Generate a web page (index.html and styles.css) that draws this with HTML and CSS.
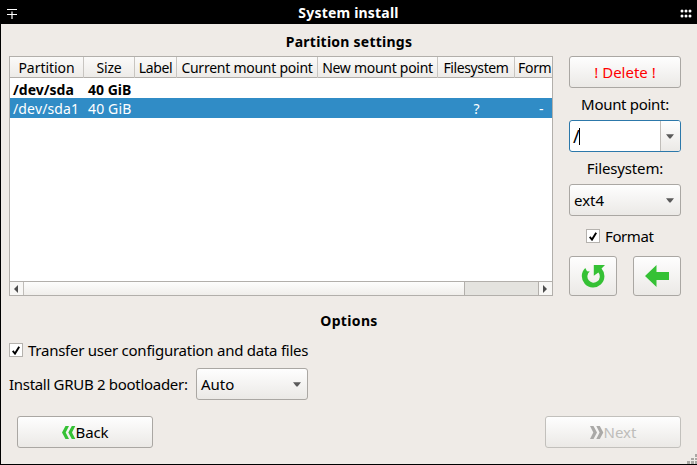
FILE: index.html
```html
<!DOCTYPE html>
<html lang="en">
<head>
<meta charset="utf-8">
<title>System install</title>
<link rel="stylesheet" href="styles.css">
</head>
<body>
<div class="window">
  <header class="titlebar">
    <svg class="menu-icon" width="10" height="10" viewBox="0 0 10 10"><path d="M0 .5h10M0 5.500h10M5 2.500v7.500" stroke="#fff" stroke-width="1.2" fill="none"/></svg>
    <h1 class="title"><span class="t-title">System install</span></h1>
    <svg class="grip-icon" width="12" height="9" viewBox="0 0 12 9" fill="#fff"><circle cx="2" cy="2" r="1.5"/><circle cx="6" cy="2" r="1.5"/><circle cx="10" cy="2" r="1.5"/><circle cx="2" cy="7" r="1.5"/><circle cx="6" cy="7" r="1.5"/><circle cx="10" cy="7" r="1.5"/></svg>
  </header>
  <main class="content">
    <h2 class="heading"><span class="t-settings">Partition settings</span></h2>
    <section class="partitions">
      <div class="list">
        <div class="row head">
          <div class="cell"><span class="t-partition">Partition</span></div>
          <div class="cell"><span class="t-size">Size</span></div>
          <div class="cell"><span class="t-label">Label</span></div>
          <div class="cell"><span class="t-current">Current mount point</span></div>
          <div class="cell"><span class="t-new">New mount point</span></div>
          <div class="cell"><span class="t-fs">Filesystem</span></div>
          <div class="cell clipped"><span class="t-form">Form</span></div>
        </div>
        <div class="row disk">
          <div class="cell"><span>/dev/sda</span></div>
          <div class="cell"><span>40 GiB</span></div>
        </div>
        <div class="row selected">
          <div class="cell"><span class="t-sda1">/dev/sda1</span></div>
          <div class="cell"><span class="t-gib">40 GiB</span></div>
          <div class="cell"></div><div class="cell"></div><div class="cell"></div>
          <div class="cell center">?</div>
          <div class="cell dash">-</div>
        </div>
        <div class="scrollbar">
          <div class="scroll-button"><svg width="4" height="8" viewBox="0 0 4 8"><path d="M4 0v8L0 4z" fill="#4d4d4d"/></svg></div>
          <div class="thumb"></div>
          <div class="track"></div>
          <div class="scroll-button end"><svg width="4" height="8" viewBox="0 0 4 8"><path d="M0 0v8l4-4z" fill="#4d4d4d"/></svg></div>
        </div>
      </div>
      <aside class="side">
        <div class="button delete"><span>! Delete !</span></div>
        <div class="caption"><span class="t-mount">Mount point:</span></div>
        <div class="combo editable">
          <div class="entry">/<i class="caret"></i></div>
          <div class="drop"><svg width="8" height="5" viewBox="0 0 8 5"><path d="M0 .3h8L4.6 4.4H3.4z" fill="#5a5a5a"/></svg></div>
        </div>
        <div class="caption"><span class="t-fscap">Filesystem:</span></div>
        <div class="combo button">
          <span>ext4</span>
          <svg width="8" height="5" viewBox="0 0 8 5"><path d="M0 .3h8L4.6 4.4H3.4z" fill="#5a5a5a"/></svg>
        </div>
        <div class="check format">
          <span class="box"><svg width="8" height="9" viewBox="0 0 8 9"><path d="M.7 4.8 3 7.6 7.2.8" fill="none" stroke="#000" stroke-width="1.9"/></svg></span>
          <span class="t-format">Format</span>
        </div>
        <div class="tools">
          <div class="button tool"><svg width="24" height="24" viewBox="0 0 24 24"><path d="M4.300 4 6 7.200 8.800 7.600A6.200 6.200 0 1 0 17.400 8.600L12.800 11.800V1H24L20.500 4.600A11.300 11.300 0 1 1 4.300 4z" fill="#35c135"/></svg></div>
          <div class="button tool"><svg width="24" height="22" viewBox="0 0 24 22"><path d="M0 11 11.5 0v7H24v8H11.5V22z" fill="#35c135"/></svg></div>
        </div>
      </aside>
    </section>
    <h2 class="heading options"><span class="t-options">Options</span></h2>
    <div class="check transfer">
      <span class="box"><svg width="8" height="9" viewBox="0 0 8 9"><path d="M.7 4.8 3 7.6 7.2.8" fill="none" stroke="#000" stroke-width="1.9"/></svg></span>
      <span class="t-transfer">Transfer user configuration and data files</span>
    </div>
    <div class="boot">
      <span class="boot-label"><span class="t-grub">Install GRUB 2 bootloader:</span></span>
      <div class="combo button">
        <span>Auto</span>
        <svg width="8" height="5" viewBox="0 0 8 5"><path d="M0 .3h8L4.6 4.4H3.4z" fill="#5a5a5a"/></svg>
      </div>
    </div>
    <footer class="nav">
      <div class="button back"><svg width="14" height="13" viewBox="0 0 14 13"><path d="M3.500 0H7L3.700 6.500 7 13H3.500L0 6.500zM9.800 0h3.500L10 6.500l3.300 6.500H9.800L6.300 6.500z" fill="#35c135"/></svg><span class="t-back">Back</span></div>
      <div class="button next"><svg width="14" height="13" viewBox="0 0 14 13"><path d="M0 0h3.500L7 6.500 3.500 13H0l3.300-6.500zM6.300 0h3.500l3.500 6.500L9.800 13H6.300l3.300-6.500z" fill="#aaa9a7"/></svg><span>Next</span></div>
    </footer>
  </main>
  <svg class="resize" width="10" height="10" viewBox="0 0 10 10" fill="#aaa8a4"><path d="M8 0h2v3H8zM4 4h3v2H4zM8 4h2v2H8zM0 7h3v3H0zM4 7h3v3H4zM8 7h2v3H8z"/></svg>
</div>
</body>
</html>
```

FILE: styles.css
```css
* { box-sizing: border-box; }
body { margin: 0; font: 15px/20px "Noto Sans", "Open Sans", sans-serif; color: #000; }
svg { display: block; flex: none; }
span { white-space: nowrap; }
.window { position: relative; width: 697px; height: 465px; overflow: hidden; background: #efebe7; border-left: 1px solid #000; border-bottom: 1px solid #000; }
.titlebar { display: flex; align-items: center; justify-content: space-between; height: 24px; padding: 3px 5px 0 6px; background: #000; color: #fff; }
.title { margin: -1px 0 0; font-size: 14px; line-height: 20px; }
.content { padding: 8px 16px 0 8px; }
.heading { margin: 0; width: 680px; height: 24px; font-size: 14px; line-height: 19px; text-align: center; }
.partitions { display: flex; justify-content: space-between; height: 240px; }
.list { display: flex; flex-direction: column; width: 544px; border: 1px solid #b2afab; background: #fff; overflow: hidden; }
.row { display: grid; grid-template-columns: 74px 51px 42px 141px 120px 77px 37px; height: 20px; line-height: 20px; }
.row .cell { padding-left: 3px; }
.head { height: 21px; background: linear-gradient(#fbfaf9, #edebe8); border-bottom: 1px solid #b2afab; margin-bottom: 1px; font-size: 14px; line-height: 21px; }
.head .cell { padding: 0; border-right: 1px solid #c8c5c1; display: flex; justify-content: center; }
.head .clipped { border: 0; justify-content: flex-start; padding-left: 3px; overflow: hidden; }
.disk { height: 19px; font-weight: 700; font-size: 14px; line-height: 22px; }
.selected { background: #308cc6; color: #fff; font-size: 14px; line-height: 21px; }
.selected .center { text-align: center; padding: 0; }
.selected .dash { padding-left: 24px; }
.selected .cell:nth-child(2), .disk .cell:nth-child(2) { padding-left: 4px; }
.scrollbar { display: flex; height: 14px; margin-top: auto; border-top: 1px solid #b2afab; background: #fbfaf9; }
.scroll-button { display: flex; align-items: center; justify-content: center; width: 14px; border-right: 1px solid #c0bdb9; background: #f8f7f5; }
.scroll-button.end { border: 0; }
.thumb { width: 441px; border-right: 1px solid #b2afab; background: linear-gradient(#fdfdfc, #f0eeeb); }
.track { width: 74px; border-right: 1px solid #b2afab; background: #e4e3df; }
.thumb, .track { flex: none; }
.side { width: 112px; display: flex; flex-direction: column; }
.button { display: flex; align-items: center; justify-content: center; height: 32px; border: 1px solid #aaa7a3; border-radius: 3px; background: linear-gradient(#fefefe, #ebe9e6); }
.delete { color: #f00; }
.caption { height: 32px; line-height: 33px; text-align: center; }
.combo { display: flex; height: 32px; }
.combo.button { justify-content: space-between; padding: 0 6px 0 4px; }
.editable { border: 1px solid #2c78aa; border-radius: 3px; background: #fff; overflow: hidden; }
.entry { display: flex; align-items: center; width: 90px; padding-left: 3px; font-size: 18px; }
.caret { width: 1px; height: 17px; margin-left: -1px; background: #000; }
.drop { flex: 1; display: flex; align-items: center; justify-content: center; padding-right: 2px; border-left: 1px solid #c0bdb9; background: linear-gradient(#fefefe, #ebe9e6); }
.check { display: flex; align-items: center; gap: 5px; }
.box { display: flex; align-items: center; justify-content: center; width: 14px; height: 14px; border: 1px solid #b5b2ae; background: #fff; }
.format { height: 40px; padding: 0 0 0 17px; }
.tools { display: flex; justify-content: space-between; }
.tool { width: 48px; height: 40px; }
.options { margin-top: 15px; height: 29px; line-height: 20px; }
.transfer { height: 20px; }
.boot { display: flex; align-items: center; margin-top: 8px; }
.boot-label { width: 187px; }
.boot .combo { width: 112px; }
.nav { display: flex; justify-content: space-between; margin: 16px 0 0 8px; }
.nav .button { width: 136px; }
.next { border-color: #c2c0bc; color: #bebdba; }
.resize { position: absolute; right: 0; bottom: 0; }

/* Tracking per label */
.t-title { letter-spacing: .2px; }
.t-settings { letter-spacing: .24px; }
.t-options { letter-spacing: .35px; }
.t-size { letter-spacing: -.15px; }
.t-partition { letter-spacing: -.05px; }
.t-label { letter-spacing: -.4px; }
.t-current { letter-spacing: -.25px; }
.t-new { letter-spacing: -.28px; }
.t-fs { letter-spacing: -.4px; }
.t-form { letter-spacing: -.3px; }
.t-sda1, .t-gib { letter-spacing: .15px; }
.t-mount { letter-spacing: -.3px; }
.t-fscap { letter-spacing: -.15px; }
.t-format { letter-spacing: -.4px; }
.t-transfer { letter-spacing: -.25px; }
.t-grub { letter-spacing: -.3px; }
.t-back { letter-spacing: -.1px; }
```
